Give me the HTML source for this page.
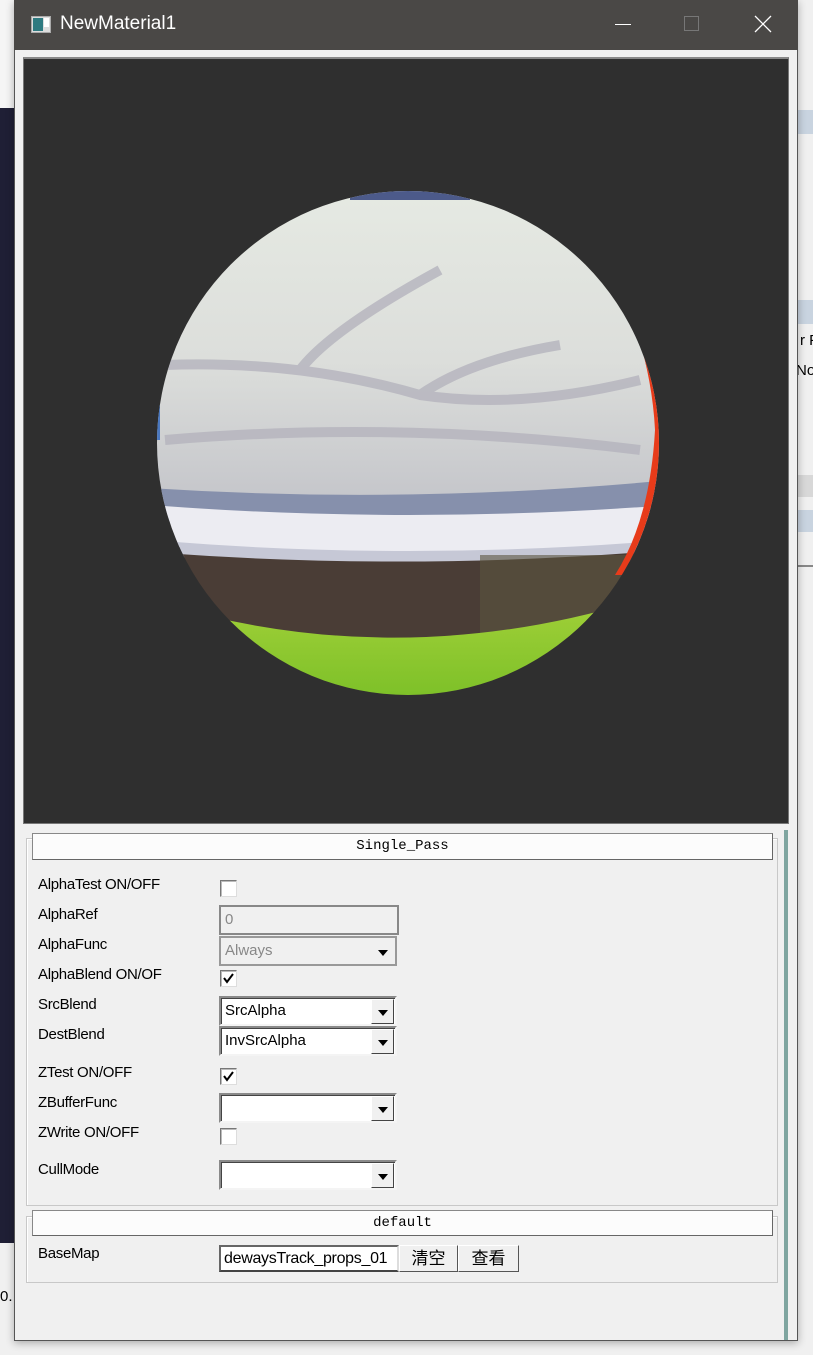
<!DOCTYPE html>
<html><head><meta charset="utf-8"><style>
*{margin:0;padding:0;box-sizing:border-box}
body{width:813px;height:1355px;position:relative;overflow:hidden;background:#f0f0f0;font-family:"Liberation Sans","Noto Sans CJK SC",sans-serif;font-size:15px;color:#000}
.abs{position:absolute}
.lbl{position:absolute;left:38px;font-size:15px;letter-spacing:-0.3px}
.cb{position:absolute;left:220px;width:17px;height:17px;background:#fff;border:1px solid #777;border-right-color:#ddd;border-bottom-color:#ddd;box-shadow:inset 1px 1px 0 #bbb}
.cb svg{position:absolute;left:1px;top:1px}
.combo{position:absolute;left:219px;width:178px;height:30px;background:#fff;border:2px solid #8a8a8a;border-right-color:#f4f4f4;border-bottom-color:#f4f4f4;box-shadow:inset 1px 1px 0 #444}
.combo span{position:absolute;left:4px;top:4px;font-size:15px}
.combo .btn{position:absolute;right:1px;top:1px;width:23px;height:25px;background:#f0f0f0;border:1px solid #fff;border-right-color:#444;border-bottom-color:#444}
.combo .btn:after{content:"";position:absolute;left:6px;top:10px;border:5px solid transparent;border-top:6px solid #000;border-bottom:0}
</style></head><body>
<div class="abs" style="left:0;top:0;width:14px;height:110px;background:#f5f5f5"></div>
<div class="abs" style="left:0;top:108px;width:14px;height:1135px;background:#1f1f35"></div>
<div class="abs" style="left:0;top:1243px;width:14px;height:112px;background:#f0f0f0"></div>
<div class="abs" style="left:0;top:1288px;font-size:15px">0.</div>
<div class="abs" style="left:798px;top:0;width:15px;height:1355px;background:#f0f0f0"></div>
<div class="abs" style="left:798px;top:110px;width:15px;height:24px;background:#c9d4e0"></div>
<div class="abs" style="left:798px;top:300px;width:15px;height:24px;background:#c9d4e0"></div>
<div class="abs" style="left:800px;top:332px;font-size:15px;white-space:nowrap">r F</div>
<div class="abs" style="left:796px;top:362px;font-size:15px;white-space:nowrap">No</div>
<div class="abs" style="left:798px;top:475px;width:15px;height:22px;background:#d8d8d8"></div>
<div class="abs" style="left:798px;top:510px;width:15px;height:22px;background:#c9d4e0"></div>
<div class="abs" style="left:798px;top:565px;width:15px;height:2px;background:#888"></div>
<div class="abs" style="left:14px;top:0;width:784px;height:1341px;background:#f0f0f0;border:1px solid #555;box-shadow:0 2px 8px rgba(0,0,0,.3)"></div>
<div class="abs" style="left:14px;top:0;width:784px;height:50px;background:#4a4846"></div>
<div class="abs" style="left:31px;top:16px;width:20px;height:17px;background:#ddd;border:1px solid #aaa">
 <div class="abs" style="left:1px;top:1px;width:10px;height:13px;background:#2e7a80"></div>
 <div class="abs" style="left:12px;top:1px;width:5px;height:9px;background:#fff"></div>
</div>
<div class="abs" style="left:60px;top:13px;color:#fff;font-size:19px">NewMaterial1</div>
<div class="abs" style="left:615px;top:24px;width:16px;height:1px;background:#fff"></div>
<div class="abs" style="left:684px;top:16px;width:15px;height:15px;border:1px solid #777"></div>
<svg class="abs" style="left:754px;top:15px" width="18" height="18"><path d="M1 1L17 17M17 1L1 17" stroke="#fff" stroke-width="1.3"/></svg>
<div class="abs" style="left:23px;top:57px;width:766px;height:767px;background:#2f2f2f;border:1px solid #777;border-top:2px solid #888"></div>
<svg class="abs" style="left:0;top:0" width="813" height="760">
<defs><clipPath id="c"><ellipse cx="408" cy="443" rx="251" ry="252"/></clipPath>
<linearGradient id="st" x1="0" y1="0" x2="0" y2="1"><stop offset="0" stop-color="#e6eae3"/><stop offset=".55" stop-color="#dcdedb"/><stop offset="1" stop-color="#c4c5ca"/></linearGradient>
<linearGradient id="gr" x1="0" y1="0" x2="0" y2="1"><stop offset="0" stop-color="#a5d23a"/><stop offset="1" stop-color="#7cc028"/></linearGradient>
</defs>
<g clip-path="url(#c)">
<rect x="150" y="185" width="520" height="320" fill="url(#st)"/>
<rect x="350" y="188" width="120" height="12" fill="#4c5a8a"/>
<path d="M165 365 Q300 360 420 395 Q520 410 640 380 M165 440 Q400 420 640 450 M300 370 Q330 330 440 270 M420 395 Q470 360 560 345" stroke="#b4b3bd" stroke-width="10" fill="none" opacity=".8"/>
<path d="M150 488 Q408 505 670 480 L670 520 Q408 535 150 520Z" fill="#8690ac"/>
<path d="M150 505 Q408 525 670 505 L670 552 Q408 565 150 545Z" fill="#ececf2"/>
<path d="M150 540 Q408 562 670 540 L670 560 Q408 575 150 555Z" fill="#c6c8d6"/>
<path d="M150 552 Q408 572 670 550 L670 700 L150 700Z" fill="#4a3d36"/>
<rect x="480" y="555" width="190" height="90" fill="#5b5540" opacity=".6"/>
<path d="M150 600 Q408 680 670 590 L670 700 L150 700Z" fill="url(#gr)"/>
<path d="M590 230 Q650 330 655 430 Q650 520 615 575 L645 575 Q665 450 665 380 Q640 290 610 225Z" fill="#e83b1a"/>
<rect x="155" y="370" width="5" height="70" fill="#4a78c0"/>
</g>
</svg>
<div class="abs" style="left:784px;top:830px;width:4px;height:510px;background:#7fa5a0"></div>
<div class="abs" style="left:26px;top:838px;width:752px;height:368px;border:1px solid #c8c8c8;box-shadow:inset 1px 1px 0 #fff"></div>
<div class="abs" style="left:32px;top:833px;width:741px;height:27px;background:#fcfcfc;border:1px solid #888;border-right-color:#666;border-bottom-color:#666;font-family:'Liberation Mono',monospace;font-size:14px;text-align:center;line-height:25px">Single_Pass</div>
<div class="lbl" style="top:876px">AlphaTest ON/OFF</div>
<div class="cb" style="top:880px"></div>
<div class="lbl" style="top:906px">AlphaRef</div>
<div class="abs" style="left:219px;top:905px;width:180px;height:30px;background:#f0f0f0;border:2px solid #888"><span class="abs" style="left:4px;top:4px;color:#888">0</span></div>
<div class="lbl" style="top:936px">AlphaFunc</div>
<div class="combo" style="top:936px;background:#f0f0f0;border-color:#999;box-shadow:none"><span style="color:#888">Always</span><div class="btn" style="border-color:#f0f0f0"></div></div>
<div class="lbl" style="top:966px">AlphaBlend ON/OF</div>
<div class="cb" style="top:970px"><svg width="13" height="13"><path d="M2 6L5 10L11 2" stroke="#000" stroke-width="2" fill="none"/></svg></div>
<div class="lbl" style="top:996px">SrcBlend</div>
<div class="combo" style="top:996px"><span>SrcAlpha</span><div class="btn"></div></div>
<div class="lbl" style="top:1026px">DestBlend</div>
<div class="combo" style="top:1026px"><span>InvSrcAlpha</span><div class="btn"></div></div>
<div class="lbl" style="top:1064px">ZTest ON/OFF</div>
<div class="cb" style="top:1068px"><svg width="13" height="13"><path d="M2 6L5 10L11 2" stroke="#000" stroke-width="2" fill="none"/></svg></div>
<div class="lbl" style="top:1094px">ZBufferFunc</div>
<div class="combo" style="top:1093px"><div class="btn"></div></div>
<div class="lbl" style="top:1124px">ZWrite ON/OFF</div>
<div class="cb" style="top:1128px"></div>
<div class="lbl" style="top:1161px">CullMode</div>
<div class="combo" style="top:1160px"><div class="btn"></div></div>
<div class="abs" style="left:26px;top:1216px;width:752px;height:67px;border:1px solid #c8c8c8;box-shadow:inset 1px 1px 0 #fff"></div>
<div class="abs" style="left:32px;top:1210px;width:741px;height:26px;background:#fcfcfc;border:1px solid #888;border-right-color:#666;border-bottom-color:#666;font-family:'Liberation Mono',monospace;font-size:14px;text-align:center;line-height:24px">default</div>
<div class="lbl" style="top:1245px">BaseMap</div>
<div class="abs" style="left:219px;top:1245px;width:180px;height:27px;background:#fff;border:2px solid #666;border-right-color:#ddd;border-bottom-color:#444;overflow:hidden;white-space:nowrap;font-size:16px;line-height:23px;padding-left:3px;letter-spacing:-0.3px">dewaysTrack_props_01</div>
<div class="abs" style="left:399px;top:1245px;width:59px;height:27px;background:#f0f0f0;border:1px solid #fff;border-right-color:#555;border-bottom-color:#555;text-align:center;font-size:17px;line-height:25px">清空</div>
<div class="abs" style="left:458px;top:1245px;width:61px;height:27px;background:#f0f0f0;border:1px solid #fff;border-right-color:#555;border-bottom-color:#555;text-align:center;font-size:17px;line-height:25px">查看</div>
</body></html>
